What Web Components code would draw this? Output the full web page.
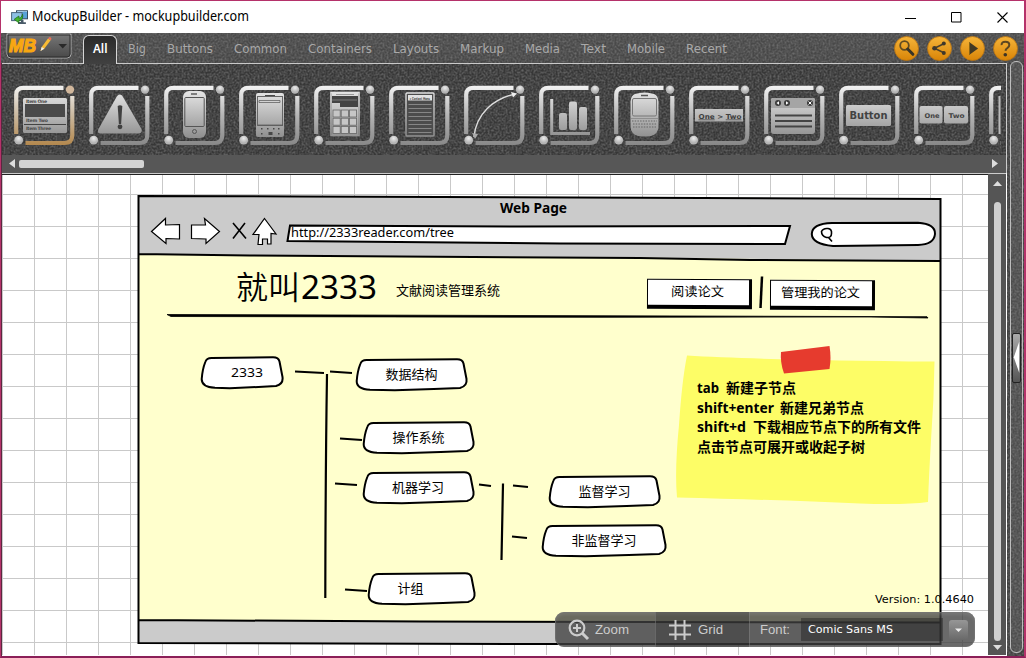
<!DOCTYPE html>
<html lang="zh">
<head>
<meta charset="utf-8">
<title>MockupBuilder</title>
<style>
html,body{margin:0;width:1026px;height:658px;overflow:hidden;background:#fff}
</style>
</head>
<body>
<app-window></app-window>
<script>
const CJK='"Noto Sans","Noto Sans CJK SC",sans-serif';
const define=(name,render,after)=>customElements.define(name,class extends HTMLElement{
  connectedCallback(){
    if(this.shadowRoot)return;
    const root=this.attachShadow({mode:'open'});
    root.innerHTML=render(this);
    if(after)after(this,root);
  }
});

/* Text set to an exact measure; attributes: w, size, weight, face */
define('fit-text',el=>{
  const w=+el.getAttribute('w'),s=+el.getAttribute('size')||13,h=Math.ceil(s*1.5);
  return `<style>:host{display:block;flex:none;width:${w}px;height:${h}px}svg{display:block;overflow:visible}
  text{font-family:${el.getAttribute('face')||CJK};font-size:${s}px;font-weight:${el.getAttribute('weight')||400};fill:currentColor}</style>
  <svg width="${w}" height="${h}"><text y="${s*1.1}" textLength="${w}" lengthAdjust="spacingAndGlyphs">${el.textContent}</text></svg>`;
});

/* Grainy dark surface under the panels */
define('grain-surface',()=>`<style>:host{display:block;position:absolute;inset:0;z-index:0;overflow:hidden}svg{display:block}</style>
<svg width="100%" height="100%"><filter id="n" x="0" y="0" width="100%" height="100%" color-interpolation-filters="sRGB"><feTurbulence type="fractalNoise" baseFrequency=".5" numOctaves="2" seed="4"/>
<feColorMatrix values="0 0 0 0 .5  0 0 0 0 .5  0 0 0 0 .5  1.3 0 0 0 -.45"/></filter>
<rect width="100%" height="100%" filter="url(#n)"/></svg>`);

define('title-bar',()=>`<style>:host{display:flex;align-items:center;height:32px;background:#fff;color:#000;padding:0 16px 0 10px;box-sizing:border-box}
.sp{flex:1}.c{display:flex;gap:35px}svg{display:block}fit-text{margin:-1px 0 0 4px}</style>
<svg width="17" height="15" viewBox="0 0 17 15"><rect x="5.5" y=".8" width="11" height="8" fill="#5aa2d8" stroke="#34495e"/><path d="M6.2 4Q11 1 16 2V1.3H6.2z" fill="#c4e3f7"/><rect x=".6" y="2.6" width="10.5" height="8" fill="#8dc0e4" stroke="#4b667d"/><path d="M10 10h2.5v2.2h2.4V14H7v-2h3z" fill="#495a68"/><path d="M11.5 4.2c1 4-1 6.2-3.6 6.3v2.4L3.2 9.3 7.9 6v2.2c1.9-.1 3-1.5 3.6-4z" fill="#46b62d" stroke="#176a16" stroke-width=".7"/></svg>
<fit-text w="217" size="14">MockupBuilder - mockupbuilder.com</fit-text><div class="sp"></div>
<div class="c"><svg width="11" height="11"><path d="M0 6.5h11" stroke="#000"/></svg><svg width="11" height="11"><path d="M.5.5h9.5v9.5H.5z" fill="none" stroke="#000"/></svg><svg width="11" height="11"><path d="M.5.5l10 10M10.5.5l-10 10" stroke="#000" stroke-width="1.1"/></svg></div>`);

define('round-action',el=>{
  const k=el.getAttribute('kind');
  const g={search:'<circle cx="10.5" cy="9.5" r="4.3" fill="none" stroke="#5f4a22" stroke-width="1.8"/><path d="M13.7 13l5.2 5.3" stroke="#393427" stroke-width="3" stroke-linecap="round"/>',
  share:'<path d="M17.300 7.500L7.500 12.300 17.300 17" fill="none" stroke="#4b402a" stroke-width="1.600"/><g fill="#3f382b"><circle cx="16.800" cy="7.500" r="2"/><circle cx="7.500" cy="12.300" r="2.300"/><circle cx="16.800" cy="17" r="2"/></g>',
  play:'<path d="M9.5 6.2v12.6l8.6-6.3z" fill="#413824"/><path d="M9.5 6.2v12.6" stroke="#8a6414"/>',
  help:'<path d="M8.6 9.2C8.4 6.8 10 5.8 12.3 5.8c2.6 0 4 1.3 4 3.2 0 3-3.3 2.7-3.9 5.7" fill="none" stroke="#5c4620" stroke-width="2"/><circle cx="12.3" cy="18.8" r="1.8" fill="#3d3424"/>'}[k];
  return `<style>:host{display:block;width:25px;height:25px}svg{display:block}</style><svg width="25" height="25"><defs><linearGradient id="g" x2="0" y2="1"><stop stop-color="#f6b53a"/><stop offset="1" stop-color="#d88407"/></linearGradient></defs><circle cx="12.5" cy="12.5" r="12" fill="url(#g)" stroke="#b87414" stroke-width=".8"/>${g}</svg>`;});

define('tab-strip',()=>`<style>:host{display:flex;position:relative;height:30px;background:linear-gradient(#4b4b4b,#464646);color:#a9a9a9}
.row{position:relative;z-index:1;display:flex;align-items:flex-start;flex:1;box-sizing:border-box;padding-left:5px}
.logo{width:66px;height:26px;margin-top:0}.tabs{display:flex;gap:21px;margin-left:11px;align-items:flex-start}
.tabs fit-text{margin-top:6px}.tabs .on{position:relative;color:#fff;width:34px;height:29px;margin:2px -10px 0 0;border:1px solid #d6d6d6;border-bottom:0;border-radius:6px 6px 0 0;background:linear-gradient(#2a2a2a,#414141);box-sizing:border-box;display:flex;justify-content:center}
.on fit-text{margin-top:3px}.acts{margin:3px 6px 0 auto;display:flex;gap:8px}</style>
<grain-surface></grain-surface><div class="row">
<svg class="logo" viewBox="0 0 66 26"><defs><linearGradient id="l" x2="0" y2="1"><stop stop-color="#777"/><stop offset="1" stop-color="#484848"/></linearGradient></defs><path d="M1 1v20q0 4 4 4h56q4 0 4-4V1z" fill="url(#l)" stroke="#aaa"/><path d="M2 2v19q0 3 3 3h56q3 0 3-3V2z" fill="none" stroke="#2d2d2d"/><text x="3" y="18.5" font-family="Liberation Sans,sans-serif" font-weight="700" font-style="italic" font-size="19" stroke="#f8a712" stroke-width="1.2" fill="#f8a712" textLength="27" lengthAdjust="spacingAndGlyphs">MB</text><path d="M34.500 18l1.200-4L42 5.500l2.600 1.800-6.300 8.500z" fill="#f7bb35"/><path d="M42 5.500l.8-1q1-.8 2 .1.900.8.500 1.800l-.7.900z" fill="#e8715b"/><path d="M34.500 18l1.200-4 2.600 1.800z" fill="#eee"/><path d="M52.500 11h8.500L56.700 15.500z" fill="#292929"/></svg>
<div class="tabs"><div class="on"><fit-text w="14.5" weight="600">All</fit-text></div>
${[['Big',18],['Buttons',46],['Common',53],['Containers',64],['Layouts',46],['Markup',44],['Media',35],['Text',25],['Mobile',38],['Recent',41]].map(t=>`<fit-text w="${t[1]}" face="'DejaVu Sans',sans-serif" size="12.6">${t[0]}</fit-text>`).join('')}</div>
<div class="acts">${['search','share','play','help'].map(k=>`<round-action kind="${k}"></round-action>`).join('')}</div></div>`);

define('tool-tile',el=>{
  const gold=el.hasAttribute('gold');
  return `<style>:host{display:block;flex:none;width:61px;height:61px}svg{display:block;overflow:visible}text{font-family:"DejaVu Sans",sans-serif;font-weight:700}</style>
<svg width="61" height="61"><defs><linearGradient id="f" gradientUnits="userSpaceOnUse" x1="0" y1="0" x2="0" y2="60"><stop stop-color="#f4f4f4"/><stop offset=".5" stop-color="${gold?'#cab9a0':'#b5b5b5'}"/><stop offset="1" stop-color="${gold?'#b3884e':'#888'}"/></linearGradient>
<linearGradient id="g" gradientUnits="userSpaceOnUse" x1="0" y1="8" x2="0" y2="52"><stop stop-color="#e2e2e2"/><stop offset="1" stop-color="#909090"/></linearGradient><radialGradient id="c" cy=".3"><stop stop-color="#ececec"/><stop offset="1" stop-color="#b4b4b4"/></radialGradient></defs>
<g fill="none" stroke="url(#f)" stroke-width="4.2"><path d="M2.2 49V9.5Q2.2 2.8 9.5 2.8H49.5"/><path d="M58.3 11V50Q58.3 58 50.5 58H11.5"/></g><circle cx="56" cy="4.6" r="4.2" fill="${gold?'#d1b79c':'url(#c)'}"/><circle cx="4.7" cy="55.2" r="4.4" fill="url(#c)"/>${el.icon}</svg>`;});

const ICONS=[
`<rect x="9" y="13" width="44" height="35" rx="1.5" fill="url(#g)"/><path d="M11 19h40v13H11z" fill="#4a4a4a"/><path d="M10 39.5h42" stroke="#444"/><g fill="#494949" font-size="4.6"><text x="12" y="17.6" textLength="21">Item One</text><text x="12" y="37.4" textLength="22">Item Two</text><text x="12" y="45" textLength="25">Item Three</text></g>`,
`<path d="M31 9.5Q33 9.5 34 12L52.5 44Q53.5 48 50 48.5H11Q7.8 48 9.5 44L27.5 12Q28.5 9.5 31 9.5z" fill="url(#g)"/><path d="M28.7 21q2.3-1.5 4.6 0l-1.2 18h-2.2z" fill="#404040"/><circle cx="31" cy="41.8" r="2.4" fill="#404040"/>`,
`<rect x="19" y="6" width="23" height="47" rx="6" fill="url(#g)"/><rect x="20.8" y="12.5" width="19.4" height="29" rx="1" fill="none" stroke="#555"/><path d="M27 9h6" stroke="#666" stroke-width="1.6"/><circle cx="30.5" cy="46.5" r="2" fill="none" stroke="#555"/>`,
`<rect x="17" y="8" width="28" height="44" rx="2" fill="url(#g)"/><rect x="18.5" y="11.5" width="25" height="29" fill="none" stroke="#666"/><path d="M20 15.5h21v2H20zM19 40h25" stroke="#555" stroke-width=".7" fill="none"/><g fill="#484848"><path d="M26 10h10v1H26z"/><path d="M22 43h1.500v1.500H22zM28 43h1.500v1.500H28zM34 43h1.500v1.500H34zM39 43h1.500v1.500H39zM22 48h1.500v1.500H22zM29.500 47h4v3h-4zM39 48h1.500v1.500H39z"/></g>`,
`<rect x="17" y="7.5" width="28" height="43" fill="#444" stroke="url(#g)" stroke-width="1.6"/><path d="M18 8h26v3H18zM18 18h8v4h18v28H18z" fill="url(#g)"/><g fill="#c6c6c6" stroke="#666" stroke-width=".8">${[0,1,2].map(y=>[0,1,2].map(x=>`<rect x="${19+x*8.2}" y="${25+y*8.2}" width="7.2" height="7"/>`).join('')).join('')}</g><path d="M18 15h25M22 9.5h18" stroke="#888" stroke-width=".8"/>`,
`<rect x="17" y="8" width="28" height="43" rx="1" fill="#4c4c4c" stroke="url(#g)" stroke-width="1.4"/><path d="M19 10h24v5.5H19z" fill="#e2e2e2"/><text x="21" y="14.5" font-size="3.9" fill="#444" textLength="20" lengthAdjust="spacingAndGlyphs">▸ Context Menu</text><g stroke="#959595" stroke-width=".8">${[19.5,23.5,27.5,31.5,35.5,39.5,43.5,47.5].map(y=>`<path d="M19.500 ${y}h23"/>`).join('')}</g>`,
`<path d="M10 52C12 29 29 14 51 9" fill="none" stroke="#ddd" stroke-width="1.4"/><path d="M47 7l6 1.5-4 4z" fill="#eee"/><path d="M8 48l3 6 3-5z" fill="#aaa"/>`,
`<path d="M12.7 14V48.6H51" fill="none" stroke="url(#g)" stroke-width="3"/><g fill="url(#g)"><rect x="20" y="28" width="8" height="17" rx="2"/><rect x="30" y="16.5" width="8" height="28.5" rx="2"/><rect x="40" y="22" width="8" height="23" rx="2"/></g>`,
`<path d="M21 9Q30.5 6 40 9Q44 10 44.5 17V42Q44 49 37 51Q30.500 52 24 51Q17 49 16.500 42V17Q17 10 21 9z" fill="url(#g)"/><rect x="18.500" y="13.500" width="24" height="17.500" rx="1.500" fill="none" stroke="#777"/><path d="M27 10.500h7" stroke="#555" stroke-width="1.500"/><path d="M17 33.500h27" stroke="#777" stroke-width=".6"/><g stroke="#666" stroke-width="1.200" stroke-dasharray="1.500 1.200"><path d="M18 36h25M19 39h24M19 42h23"/></g>`,
`<rect x="6" y="24" width="48" height="12.500" fill="url(#g)"/><text x="9.500" y="33.500" font-size="6.800" fill="#404040" textLength="43" lengthAdjust="spacingAndGlyphs"><tspan text-decoration="underline">One</tspan> &gt; <tspan text-decoration="underline">Two</tspan></text>`,
`<path d="M7 15q0-2 2-2h40q2 0 2 2v31q0 3-3 3H10q-3 0-3-3z" fill="url(#g)"/><path d="M7 23V15q0-2 2-2h40q2 0 2 2v8z" fill="#a5a5a5"/><g fill="#3d3d3d"><circle cx="14" cy="18" r="3"/><circle cx="23" cy="18" r="3"/><circle cx="46" cy="18" r="3"/></g><path d="M12.500 18l2.500-1.700v3.400zM24.500 18L22 16.300v3.400z" fill="#fff"/><path d="M44.500 16.500l3 3m0-3l-3 3" stroke="#fff"/><path d="M11 30.500h37M11 36h37M11 41.500h37" stroke="#444" stroke-width="2"/>`,
`<rect x="7" y="20" width="45" height="21" rx="1.500" fill="url(#g)"/><text x="10.500" y="34" font-size="11" fill="#424242" textLength="38" lengthAdjust="spacingAndGlyphs">Button</text>`,
`<rect x="5.500" y="21" width="23" height="17.500" rx="2" fill="url(#g)"/><rect x="30" y="21" width="24" height="17.500" rx="2" fill="url(#g)"/><g font-size="6.500" fill="#424242"><text x="10.500" y="32.500" textLength="15" lengthAdjust="spacingAndGlyphs">One</text><text x="34.500" y="32.500" textLength="16" lengthAdjust="spacingAndGlyphs">Two</text></g>`,
`<path d="M10.500 11v38" stroke="#bbb" stroke-width="2"/>`];

define('tool-shelf',()=>`<style>:host{display:block;position:relative;height:111px;box-sizing:border-box;background:#373737;border-top:1px solid #c9c9c9;border-right:1px solid #ccc;border-radius:0 0 3px 0}
.in{position:relative;z-index:1;height:110px;display:flex;flex-direction:column}.tiles{display:flex;gap:14px;padding:21px 0 9px 12px;width:999px;box-sizing:border-box;overflow:hidden;height:91px;margin-right:6px}
.bar{height:19px;background:#575757;border-bottom:1px solid #ccc;box-sizing:border-box;display:flex;align-items:center;padding:0 8px 1px 7px;margin-bottom:0}
.thumb{width:125px;height:8px;border-radius:2px;background:#d3d3d3;margin-left:4px}.sp{flex:1}svg{display:block}</style><grain-surface></grain-surface>
<div class="in"><div class="tiles"></div><div class="bar"><svg width="6" height="9"><path d="M6 0v9L0 4.500z" fill="#ddd"/></svg><div class="thumb"></div><div class="sp"></div><svg width="6" height="9"><path d="M0 0v9l6-4.500z" fill="#ddd"/></svg></div></div>`,
(el,root)=>{const box=root.querySelector('.tiles');ICONS.forEach((icon,i)=>{const t=document.createElement('tool-tile');t.icon=icon;if(!i)t.setAttribute('gold','');box.append(t);});});

/* Canvas items take page coordinates; the stage's padding box starts at (2,175). */
const place=el=>`position:absolute;left:${el.getAttribute('x')-2}px;top:${el.getAttribute('y')-175}px`;

define('map-node',el=>{const w=+el.getAttribute('w'),tx=+el.getAttribute('tx'),tw=+el.getAttribute('tw');
return `<style>:host{display:block;${place(el)};width:${w}px;height:32px}svg{display:block;overflow:visible}text{font:13px ${CJK}}</style>
<svg width="${w}" height="32"><path d="M4.300 5Q5.500 1 10.500 1L${w-10} .3Q${w-4.500} .3 ${w-3.500} 4.500L${w-.5} 20Q${w+.5} 27 ${w-7} 29L${w*.7} 30L${w*.35} 31.200L14 30.800Q.5 30 .7 22Q1.500 12 4.300 5z" fill="#fff" stroke="#000" stroke-width="2" stroke-linejoin="round"/><text x="${tx}" y="20.300" textLength="${tw}" lengthAdjust="spacingAndGlyphs">${el.textContent}</text></svg>`;});

define('sketch-button',el=>`<style>:host{display:flex;${place(el)};width:105px;height:30px;box-sizing:border-box;background:#fff;border:solid #000;border-width:1px 3px 4px 1.500px;justify-content:center;transform:rotate(.15deg)}fit-text{margin:2px 2px 0 0}</style>
<fit-text w="${el.getAttribute('tw')}" size="13">${el.textContent}</fit-text>`);

define('sticky-note',el=>`<style>:host{display:block;${place(el)};width:260px;height:160px}svg{display:block;overflow:visible}text{font:700 14px ${CJK}}</style>
<svg viewBox="676 345 260 160" width="260" height="160"><path d="M687 355.500Q760 360 934.500 361.500Q934 400 931 440Q929 475 928 502Q905 505 860 503.500Q780 500 677 497.500Q674.500 470 679 425Q682 380 687 355.500z" fill="#fdfd66"/><path d="M781 352L829.500 346Q831.500 358 829.500 369L784 373.500Q780 362 781 352z" fill="#e63b2e"/>
<g><text x="697" y="392.500" textLength="22" lengthAdjust="spacingAndGlyphs">tab</text><text x="726" y="392.500" textLength="70">新建子节点</text>
<text x="697" y="412.500" textLength="77" lengthAdjust="spacingAndGlyphs">shift+enter</text><text x="780" y="412.500" textLength="84">新建兄弟节点</text>
<text x="697" y="432" textLength="49" lengthAdjust="spacingAndGlyphs">shift+d</text><text x="753" y="432" textLength="168">下载相应节点下的所有文件</text>
<text x="697" y="452" textLength="168">点击节点可展开或收起子树</text></g></svg>`);

define('browser-frame',el=>`<style>:host{display:block;${place(el)};width:804px;height:450px}svg{display:block;overflow:visible}text{font-family:${CJK}}</style>
<svg viewBox="138 195 804 450" width="804" height="450"><path d="M138.500 196L640 197.500L940.500 199V644.500L138.500 643z" fill="#ffffcd"/>
<path d="M138.500 196L640 197.500L940.500 199V261L640 257.500L400 256.300L138.500 254z" fill="#cbcbcb"/><path d="M138.500 620L940.500 622.500V644.500L138.500 643z" fill="#cbcbcb"/>
<g fill="none" stroke="#000" stroke-width="2"><path d="M138.500 254V196L300 196.500L640 197.800L940.500 199V644L540 644L138.500 643V254L250 255.500L400 256.500L640 258L750 260L940.500 261M138.500 620L420 621.500L940.500 622.500"/></g>
<text x="500" y="213" font-size="13.500" font-weight="700" textLength="67" lengthAdjust="spacingAndGlyphs">Web Page</text>
<g fill="#fff" stroke="#000" stroke-width="1.200"><path d="M151.500 231.500L165.500 218.500V225L179.500 224.500V239L166 238.500V243.500z"/><path d="M191.500 225H205.500L204.500 218.500L219.500 231.500L206 243.500V239L191.500 238.500z"/><path d="M264.500 218.500L276 234L271 233.500V244H267.500V239H262.500V244.500H258L259 234.500L253 234.500z"/></g>
<path d="M233 223l13 15.500M245 223l-12 15.500" stroke="#000" stroke-width="1.600" fill="none"/>
<path d="M290 225.500L520 226.500L790 226L785 244L560 243.500L287.500 241z" fill="#fff" stroke="#000" stroke-width="2"/>
<text x="291" y="237" font-size="12.500" textLength="163" lengthAdjust="spacingAndGlyphs">http://2333reader.com/tree</text>
<path d="M832 223L918 222.800Q935.500 224 935 234Q934 244.500 918 245L833 246Q812 244 811.800 234Q812 223.500 832 223z" fill="#fff" stroke="#000" stroke-width="2"/>
<path d="M831.500 233.500Q831.500 238 826.500 237.500Q821.500 236 821.500 231.500Q823 228 828 228.500Q832 229 831.500 233.500zM828.500 237.500L832 241.500" fill="none" stroke="#000" stroke-width="1.600"/>
<text x="236" y="299" font-size="32" font-weight="350" textLength="64" lengthAdjust="spacingAndGlyphs">就叫</text><text x="301" y="299" font-size="33" textLength="76" lengthAdjust="spacingAndGlyphs">2333</text>
<text x="396" y="295" font-size="13" textLength="104">文献阅读管理系统</text>
<path d="M167 314.500L927 316.700L928 318L870 317L600 317.300L171 316.500z" stroke="#000" stroke-width=".8"/><path d="M762 276.500L760.500 308" stroke="#000" stroke-width="2.500"/></svg>`);

define('tree-links',el=>`<style>:host{display:block;${place(el)};width:240px;height:240px}svg{display:block}path{fill:none;stroke:#000;stroke-width:2.200}</style>
<svg viewBox="290 360 240 240" width="240" height="240"><path d="M295 371.500L324 373M330 371.500L352 373M340 438.500L362 440M335 483.500L357 485M345 589.500L367 591M479 484.500L491 486M513 485.500L528 487M512 536.500L527 538"/><path stroke-width="2.800" d="M327 374Q325.500 470 325.300 598M503 483.500L501.500 560"/></svg>`);

define('status-dock',el=>`<style>:host{display:flex;${place(el)};width:420px;height:35px;border-radius:9px;background:rgba(64,64,64,.78);box-shadow:inset 0 0 0 1px #77777788,inset 0 3px 3px #9994;color:#ccc;box-sizing:border-box;overflow:hidden}
.s{display:flex;align-items:center;box-sizing:border-box}.z{width:100px;padding-left:13px;gap:5px}.g{width:94px;background:#2224;border-left:1px solid #8887;padding-left:13px;gap:7px}.f{flex:1;padding:0 7px 0 10px;border-left:1px solid #8887}.name{height:23px;width:142px;margin-left:11px;background:#2227;padding-left:7px;box-sizing:border-box;color:#fff}.name fit-text{margin-top:3px}.b{width:19px;height:20px;margin-left:auto;background:linear-gradient(#969696,#696969);border-radius:3px}svg{display:block;flex:none}</style>
<div class="s z"><svg width="22" height="22"><circle cx="9" cy="9" r="7.300" fill="none" stroke="#ccc" stroke-width="2.200"/><path d="M9 5v8M5 9h8" stroke="#ccc" stroke-width="2"/><path d="M14 14l6 6" stroke="#ccc" stroke-width="3"/></svg><fit-text w="34" size="13" face="'Liberation Sans',sans-serif">Zoom</fit-text></div>
<div class="s g"><svg width="22" height="20"><path d="M6.500 0v20M15.500 0v20M0 5.500h22M0 14.500h22" stroke="#ccc" stroke-width="2"/></svg><fit-text w="25" size="13" face="'Liberation Sans',sans-serif">Grid</fit-text></div>
<div class="s f"><fit-text w="30" size="13" face="'Liberation Sans',sans-serif">Font:</fit-text><div class="name"><fit-text w="85" size="11" weight="500" face="'DejaVu Sans',sans-serif">Comic Sans MS</fit-text></div><svg class="b" viewBox="0 0 19 20"><path d="M6 8.500h7L9.500 12z" fill="#eee"/></svg></div>`);

define('version-label',el=>`<style>:host{display:block;${place(el)};color:#000}</style><fit-text w="99" size="10.500" face="'DejaVu Sans',sans-serif">Version: 1.0.4640</fit-text>`);

define('canvas-stage',()=>`<style>:host{display:block;position:relative;width:986px;height:481px;overflow:hidden;border-top:1px solid #222;box-sizing:border-box;background:linear-gradient(90deg,#c9c9c9 1px,transparent 1px) 32px 0/32px 32px,linear-gradient(#c9c9c9 1px,transparent 1px) 0 19px/32px 32px,#fff}</style><slot></slot>`);

define('v-scroll',()=>`<style>:host{display:flex;flex-direction:column;align-items:center;width:18px;height:481px;background:#555;padding:7px 0 5px;box-sizing:border-box}.t{width:7px;flex:1;border-radius:4px;background:#cfcfcf;margin:16px 0 4px}svg{display:block}</style>
<svg width="9" height="5"><path d="M0 5h9L4.500 0z" fill="#ddd"/></svg><div class="t"></div><svg width="9" height="5"><path d="M0 0h9L4.500 5z" fill="#ddd"/></svg>`);

define('side-panel',()=>`<style>:host{display:block;position:relative;width:18px;background:#404040}.o{position:relative;z-index:1;box-sizing:border-box;width:13px;height:592px;margin:-2px 0 0 3px;border:1px solid #bdbdbd;border-radius:6px;background:#8883;display:flex;align-items:center}.h{width:9px;height:50px;box-sizing:border-box;border:1px solid #222;border-radius:2px;background:linear-gradient(#aaa,#555);margin:1px 0 0 1px}svg{display:block}</style>
<grain-surface></grain-surface><div class="o"><svg class="h" viewBox="0 0 9 50"><path d="M8 4v40L1 24z" fill="#fff"/></svg></div>`);

define('app-window',()=>`<style>:host{display:block;width:1026px;height:658px;box-sizing:border-box;border:1px solid #b5326a;border-width:1px 2px 2px 1px;border-bottom-color:#8b1f58;background:#fff}
.body{display:flex;border-left:1px solid #5b2840;height:593px}.left{width:1005px;display:flex;flex-direction:column}.work{display:flex;height:481px}canvas-stage{flex:none}</style>
<title-bar></title-bar><tab-strip></tab-strip><div class="body"><div class="left"><tool-shelf></tool-shelf><div class="work"><canvas-stage>
<browser-frame x="138" y="195"></browser-frame>
<sketch-button x="647" y="279" tw="53">阅读论文</sketch-button><sketch-button x="770" y="280" tw="79">管理我的论文</sketch-button>
<tree-links x="290" y="360"></tree-links>
<map-node x="201" y="357" w="82" tx="30" tw="32">2333</map-node><map-node x="356" y="359" w="111" tx="29.500" tw="52">数据结构</map-node><map-node x="363" y="422" w="111" tx="29.500" tw="52">操作系统</map-node><map-node x="363" y="472" w="111" tx="29" tw="52">机器学习</map-node><map-node x="549" y="476" w="111" tx="29.500" tw="52">监督学习</map-node><map-node x="542" y="525" w="124" tx="29.500" tw="65">非监督学习</map-node><map-node x="368" y="573" w="107" tx="29.500" tw="26">计组</map-node>
<sticky-note x="676" y="345"></sticky-note><status-dock x="555" y="612"></status-dock><version-label x="875" y="591"></version-label>
</canvas-stage><v-scroll></v-scroll></div></div><side-panel></side-panel></div>`);
</script>
</body>
</html>
